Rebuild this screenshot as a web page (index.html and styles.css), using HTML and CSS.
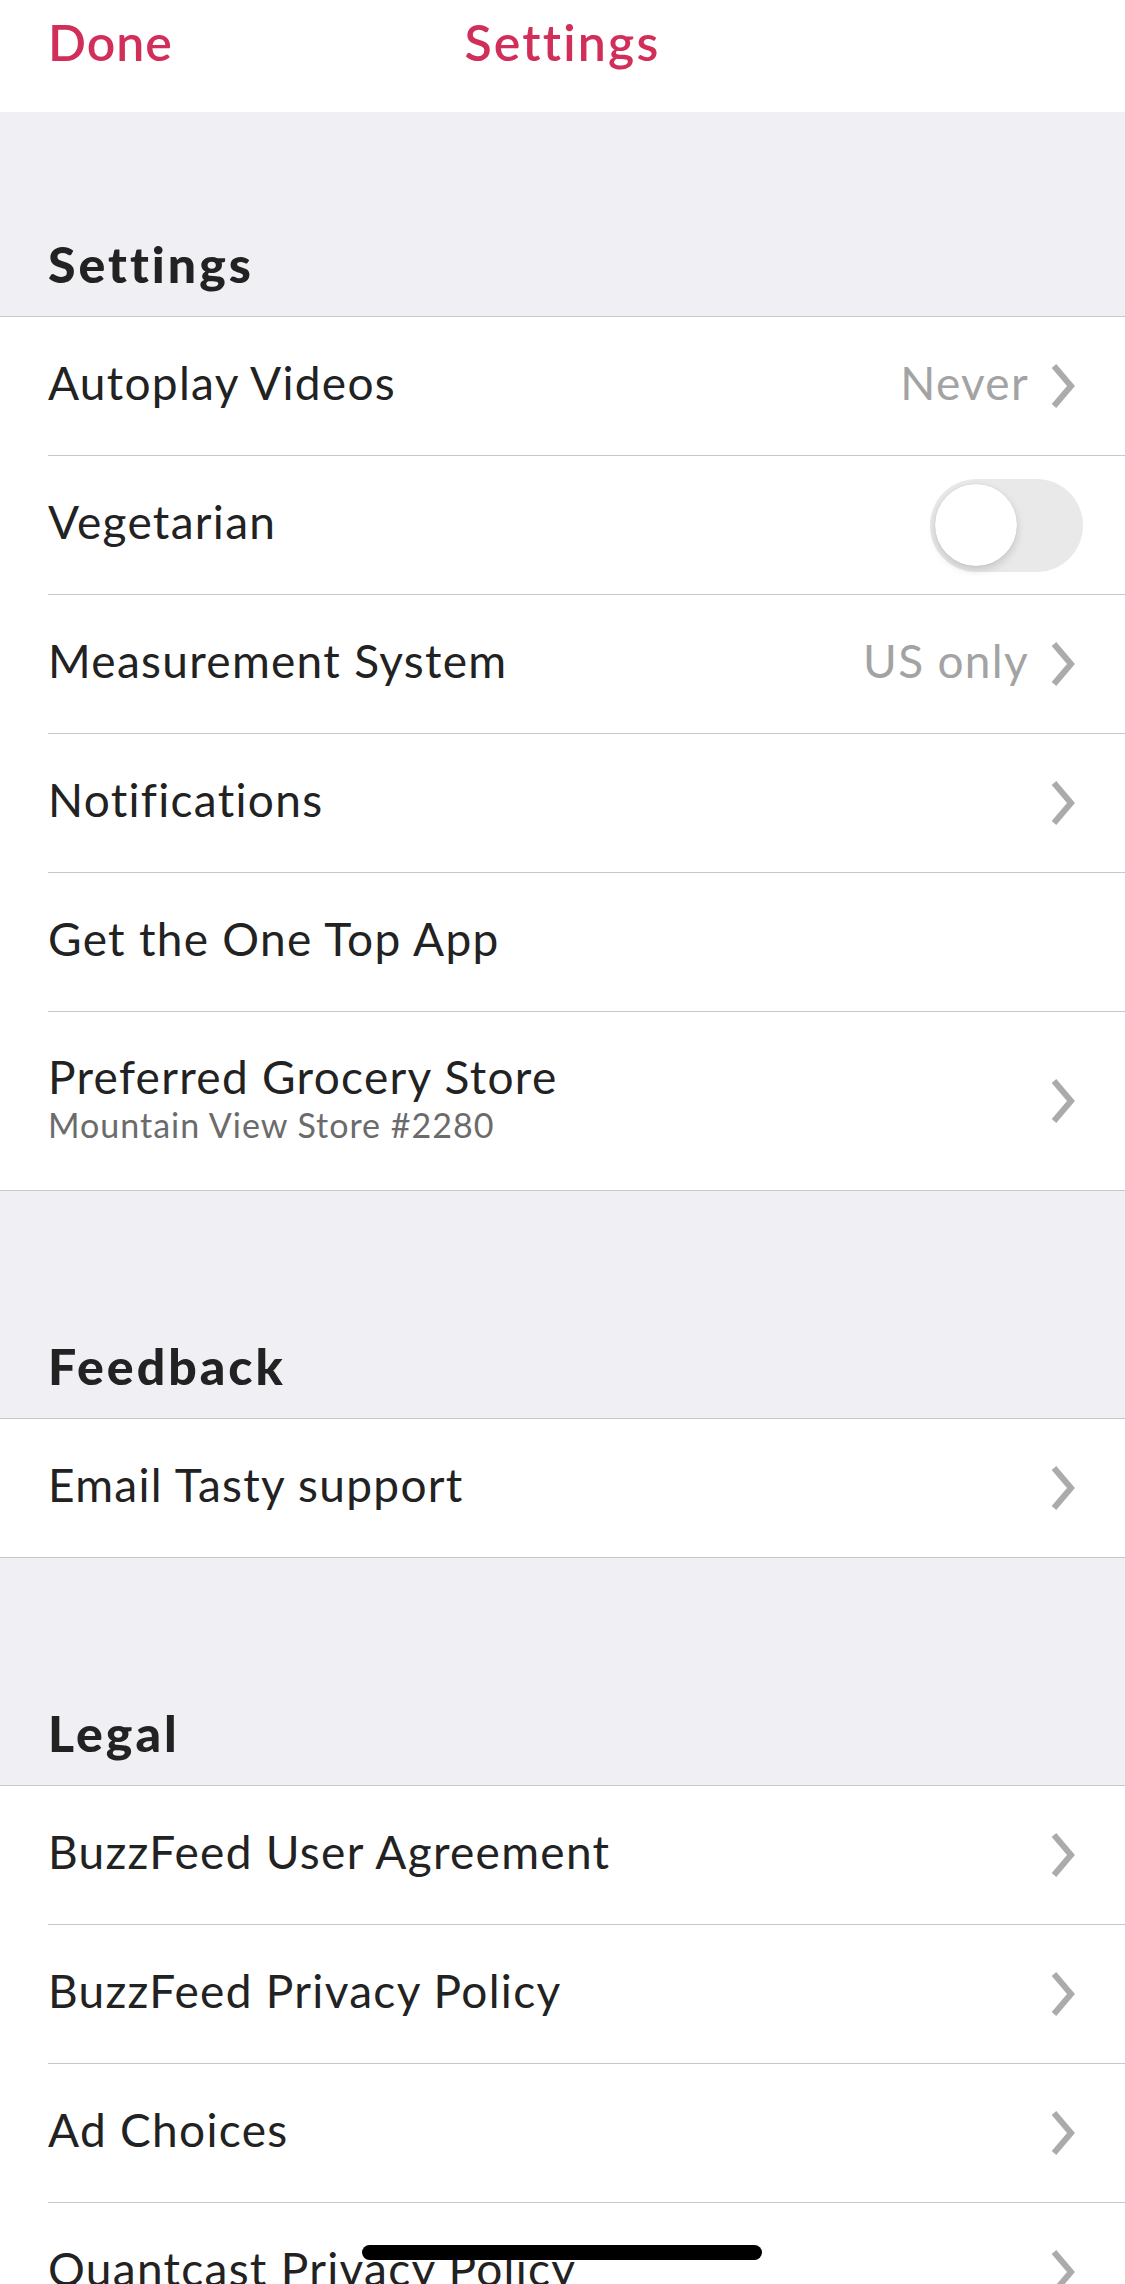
FILE: index.html
```html
<!DOCTYPE html>
<html lang="en">
<head>
    <meta charset="UTF-8">
    <meta name="viewport" content="width=device-width, initial-scale=1.0">
    <title>Settings</title>
    <link rel="stylesheet" href="styles.css">
</head>
<body>
    <div class="navbar">
        <a class="nav-done">Done</a>
        <div class="nav-title">Settings</div>
        <div></div>
    </div>

    <!-- Settings -->
    <h2 class="section-header first">Settings</h2>
    <div class="group">
        <div class="row">
            <span class="label">Autoplay Videos</span>
            <span class="value">Never</span>
            <svg class="chevron" viewBox="0 0 24 44"><polyline points="3,2 20,22 3,42"/></svg>
        </div>
        <div class="row">
            <span class="label">Vegetarian</span>
            <div class="toggle"><div class="knob"></div></div>
        </div>
        <div class="row">
            <span class="label">Measurement System</span>
            <span class="value">US only</span>
            <svg class="chevron" viewBox="0 0 24 44"><polyline points="3,2 20,22 3,42"/></svg>
        </div>
        <div class="row">
            <span class="label">Notifications</span>
            <svg class="chevron" viewBox="0 0 24 44"><polyline points="3,2 20,22 3,42"/></svg>
        </div>
        <div class="row">
            <span class="label">Get the One Top App</span>
        </div>
        <div class="row tall">
            <div class="label-stack">
                <span class="label">Preferred Grocery Store</span>
                <span class="sublabel">Mountain View Store #2280</span>
            </div>
            <svg class="chevron" viewBox="0 0 24 44"><polyline points="3,2 20,22 3,42"/></svg>
        </div>
    </div>

    <!-- Feedback -->
    <h2 class="section-header">Feedback</h2>
    <div class="group">
        <div class="row">
            <span class="label">Email Tasty support</span>
            <svg class="chevron" viewBox="0 0 24 44"><polyline points="3,2 20,22 3,42"/></svg>
        </div>
    </div>

    <!-- Legal -->
    <h2 class="section-header">Legal</h2>
    <div class="group">
        <div class="row">
            <span class="label">BuzzFeed User Agreement</span>
            <svg class="chevron" viewBox="0 0 24 44"><polyline points="3,2 20,22 3,42"/></svg>
        </div>
        <div class="row">
            <span class="label">BuzzFeed Privacy Policy</span>
            <svg class="chevron" viewBox="0 0 24 44"><polyline points="3,2 20,22 3,42"/></svg>
        </div>
        <div class="row">
            <span class="label">Ad Choices</span>
            <svg class="chevron" viewBox="0 0 24 44"><polyline points="3,2 20,22 3,42"/></svg>
        </div>
        <div class="row">
            <span class="label">Quantcast Privacy Policy</span>
            <svg class="chevron" viewBox="0 0 24 44"><polyline points="3,2 20,22 3,42"/></svg>
        </div>
    </div>

    <div class="home-indicator"></div>
</body>
</html>
```

FILE: styles.css
```css
body {
    font-family: 'Lato', 'Open Sans', sans-serif;
    background-color: #f0eff4;
    color: #222;
    margin: 0;
    overflow: hidden;
}
.navbar {
    background-color: #fff;
    height: 112px;
    box-sizing: border-box;
    padding: 12px 48px 0;
    display: grid;
    grid-template-columns: 1fr auto 1fr;
    align-items: start;
    font-size: 50px;
    line-height: 60px;
    font-weight: 600;
    color: #d22e5a;
}
.nav-done {
    letter-spacing: 1px;
    cursor: pointer;
}
.nav-title {
    letter-spacing: 2.2px;
}
.section-header {
    margin: 0;
    padding: 145px 48px 22px;
    font-size: 50px;
    line-height: 60px;
    font-weight: 900;
    letter-spacing: 3px;
    color: #222;
    border-bottom: 1px solid #c8c7cc;
}
.section-header.first {
    padding-top: 122px;
}
.group {
    background-color: #fff;
    border-bottom: 1px solid #c8c7cc;
}
.row {
    margin-left: 48px;
    padding-right: 50px;
    height: 138px;
    display: flex;
    align-items: center;
    border-bottom: 1px solid #c8c7cc;
}
.row:last-child {
    border-bottom: none;
}
.row.tall {
    height: 178px;
}
.label {
    flex: 1;
    font-size: 46px;
    line-height: 52px;
    letter-spacing: 1.3px;
    color: #222;
    padding-bottom: 6px;
}
.label-stack {
    flex: 1;
    display: flex;
    flex-direction: column;
}
.label-stack .label {
    padding-bottom: 0;
}
.sublabel {
    font-size: 34px;
    line-height: 44px;
    letter-spacing: 1px;
    color: #6b6b6b;
    padding-bottom: 4px;
}
.value {
    font-size: 46px;
    line-height: 52px;
    letter-spacing: 1.3px;
    color: #a3a3a3;
    margin-right: 22px;
    padding-bottom: 6px;
}
.chevron {
    width: 24px;
    height: 44px;
    flex-shrink: 0;
}
.chevron polyline {
    fill: none;
    stroke: #ababab;
    stroke-width: 6;
}
.toggle {
    width: 153px;
    height: 93px;
    border-radius: 47px;
    background-color: #e9e9ea;
    margin-right: -8px;
    display: flex;
    align-items: center;
    padding-left: 5px;
    box-sizing: border-box;
}
.knob {
    width: 82px;
    height: 82px;
    border-radius: 50%;
    background-color: #fff;
    box-shadow: 0 4px 8px rgba(0, 0, 0, 0.15), 0 0 1px rgba(0, 0, 0, 0.2);
}
.home-indicator {
    position: fixed;
    left: 362px;
    top: 2245px;
    width: 400px;
    height: 15px;
    border-radius: 8px;
    background-color: #000;
}
```
